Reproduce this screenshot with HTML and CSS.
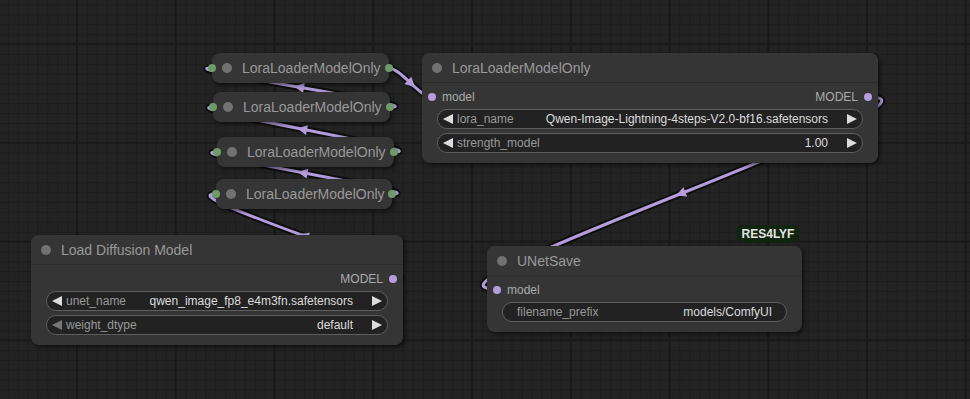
FILE: index.html
```html
<!DOCTYPE html>
<html lang="en">
<head>
<meta charset="UTF-8">
<meta name="viewport" content="width=device-width, initial-scale=1.0">
<title>Workflow</title>
<link rel="stylesheet" href="styles.css">
</head>
<body>

<div class="graph">

    <!-- links are drawn under the nodes -->
    <svg class="links" width="970" height="399" viewBox="0 0 970 399">
        <g class="link-border">
            <path d="M388 68 C401.2 68 418.8 97 432 97"/>
            <path d="M390 107 C435.6 107 166.4 68 212 68"/>
            <path d="M394 152 C440.4 152 167.6 107 214 107"/>
            <path d="M392 194 C437 194 172 152 217 152"/>
            <path d="M395 279 C444.6 279 166.4 194 216 194"/>
            <path d="M869 97 C974 97 391 289 496 289"/>
        </g>
        <g class="link-line">
            <path d="M388 68 C401.2 68 418.8 97 432 97"/>
            <path d="M390 107 C435.6 107 166.4 68 212 68"/>
            <path d="M394 152 C440.4 152 167.6 107 214 107"/>
            <path d="M392 194 C437 194 172 152 217 152"/>
            <path d="M395 279 C444.6 279 166.4 194 216 194"/>
            <path d="M869 97 C974 97 391 289 496 289"/>
        </g>
        <g class="link-arrow">
            <polygon points="7,0 -3,-5 -3,5" transform="translate(410 82.5) rotate(43.3)"/>
            <polygon points="7,0 -3,-5 -3,5" transform="translate(301 87.5) rotate(189.9)"/>
            <polygon points="7,0 -3,-5 -3,5" transform="translate(304 129.5) rotate(191.2)"/>
            <polygon points="7,0 -3,-5 -3,5" transform="translate(304.5 173) rotate(190.8)"/>
            <polygon points="7,0 -3,-5 -3,5" transform="translate(305.5 236.5) rotate(200.4)"/>
            <polygon points="7,0 -3,-5 -3,5" transform="translate(682.5 193) rotate(158.1)"/>
        </g>
    </svg>

    <!-- collapsed lora chain -->
    <div class="node collapsed lora-a">
        <span class="pin pin-in"></span>
        <span class="title-dot"></span>LoraLoaderModelOnly
        <span class="pin pin-out"></span>
    </div>
    <div class="node collapsed lora-b">
        <span class="pin pin-in"></span>
        <span class="title-dot"></span>LoraLoaderModelOnly
        <span class="pin pin-out"></span>
    </div>
    <div class="node collapsed lora-c">
        <span class="pin pin-in"></span>
        <span class="title-dot"></span>LoraLoaderModelOnly
        <span class="pin pin-out"></span>
    </div>
    <div class="node collapsed lora-d">
        <span class="pin pin-in"></span>
        <span class="title-dot"></span>LoraLoaderModelOnly
        <span class="pin pin-out"></span>
    </div>

    <!-- LoraLoaderModelOnly -->
    <div class="node lora-main">
        <div class="node-title"><span class="title-dot"></span>LoraLoaderModelOnly</div>
        <div class="node-body">
            <div class="slots">
                <div class="slot slot-in"><span class="dot"></span>model</div>
                <div class="slot slot-out">MODEL<span class="dot"></span></div>
            </div>
            <div class="widget combo">
                <span class="arrow arrow-left"></span>
                <span class="w-label">lora_name</span>
                <span class="w-value">Qwen-Image-Lightning-4steps-V2.0-bf16.safetensors</span>
                <span class="arrow arrow-right"></span>
            </div>
            <div class="widget combo">
                <span class="arrow arrow-left"></span>
                <span class="w-label">strength_model</span>
                <span class="w-value">1.00</span>
                <span class="arrow arrow-right"></span>
            </div>
        </div>
    </div>

    <!-- Load Diffusion Model -->
    <div class="node unet-loader">
        <div class="node-title"><span class="title-dot"></span>Load Diffusion Model</div>
        <div class="node-body">
            <div class="slots">
                <div class="slot"></div>
                <div class="slot slot-out">MODEL<span class="dot"></span></div>
            </div>
            <div class="widget combo">
                <span class="arrow arrow-left"></span>
                <span class="w-label">unet_name</span>
                <span class="w-value">qwen_image_fp8_e4m3fn.safetensors</span>
                <span class="arrow arrow-right"></span>
            </div>
            <div class="widget combo">
                <span class="arrow arrow-left dim"></span>
                <span class="w-label">weight_dtype</span>
                <span class="w-value">default</span>
                <span class="arrow arrow-right"></span>
            </div>
        </div>
    </div>

    <!-- UNetSave -->
    <div class="badge">RES4LYF</div>
    <div class="node unet-save">
        <div class="node-title"><span class="title-dot"></span>UNetSave</div>
        <div class="node-body">
            <div class="slots">
                <div class="slot slot-in"><span class="dot"></span>model</div>
            </div>
            <div class="widget text">
                <span class="w-label">filename_prefix</span>
                <span class="w-value">models/ComfyUI</span>
            </div>
        </div>
    </div>

</div>

</body>
</html>
```

FILE: styles.css
```css
* {
    box-sizing: border-box;
}

body {
    margin: 0;
    padding: 0;
    background-color: #232323;
    font-family: "Liberation Sans", Arial, sans-serif;
    overflow: hidden;
}

.graph {
    position: relative;
    width: 970px;
    height: 399px;
    overflow: hidden;
    background-color: #232323;
    background-image:
        linear-gradient(to right, #191919 2px, transparent 2px),
        linear-gradient(to bottom, #191919 2px, transparent 2px),
        linear-gradient(to right, #1d1d1d 1px, transparent 1px),
        linear-gradient(to bottom, #1d1d1d 1px, transparent 1px);
    background-size: 98.75px 98.75px, 98.75px 98.75px, 9.875px 9.875px, 9.875px 9.875px;
    background-position: 76px 43px, 76px 43px, 7.875px 4.5px, 7.875px 4.5px;
}

/* links */
.links {
    position: absolute;
    left: 0;
    top: 0;
}

.link-border path {
    fill: none;
    stroke: #000;
    stroke-opacity: 0.6;
    stroke-width: 7;
}

.link-line path {
    fill: none;
    stroke: #b39ddb;
    stroke-width: 3;
}

.link-arrow polygon {
    fill: #b39ddb;
}

/* nodes */
.node {
    position: absolute;
    background-color: #353535;
    border-radius: 8px;
    box-shadow: 2px 2px 4px rgba(0, 0, 0, 0.55);
    color: #999;
}

.node-title {
    height: 30px;
    display: flex;
    align-items: center;
    gap: 10px;
    padding-left: 10px;
    font-size: 14px;
    border-bottom: 1px solid #2c2c2c;
    border-radius: 8px 8px 0 0;
    background-color: #353535;
}

.title-dot {
    width: 10px;
    height: 10px;
    border-radius: 50%;
    background-color: #727272;
    flex-shrink: 0;
}

.node-body {
    padding: 4px 0 10px;
}

.slots {
    display: flex;
    justify-content: space-between;
    height: 20px;
    margin-bottom: 2px;
}

.slot {
    display: flex;
    align-items: center;
    gap: 6px;
    font-size: 12px;
    color: #aaa;
}

.slot-in {
    padding-left: 6px;
}

.slot-out {
    padding-right: 6px;
}

.dot {
    width: 8px;
    height: 8px;
    border-radius: 50%;
    background-color: #b39ddb;
}

/* widgets */
.widget {
    display: flex;
    align-items: center;
    height: 20px;
    margin: 0 15px;
    border: 1px solid #5e5e5e;
    border-radius: 10px;
    background-color: #222;
    font-size: 12px;
    white-space: nowrap;
}

.widget + .widget {
    margin-top: 4px;
}

.w-label {
    color: #999;
}

.w-value {
    flex: 1;
    text-align: right;
    color: #ddd;
}

.combo {
    padding: 0 5px;
}

.combo .arrow-left {
    margin-right: 4px;
}

.combo .w-value {
    margin-right: 19px;
}

.text {
    padding: 0 14px;
}

.arrow {
    width: 0;
    height: 0;
    border-top: 5px solid transparent;
    border-bottom: 5px solid transparent;
}

.arrow-left {
    border-right: 10px solid #ddd;
}

.arrow-left.dim {
    border-right-color: #777;
}

.arrow-right {
    border-left: 10px solid #ddd;
}

/* collapsed nodes */
.collapsed {
    width: 177px;
    height: 30px;
    display: flex;
    align-items: center;
    gap: 10px;
    padding-left: 10px;
    font-size: 14px;
}

.pin {
    position: absolute;
    top: 11px;
    width: 8px;
    height: 8px;
    border-radius: 50%;
    background-color: #6f9a6a;
}

.pin-in {
    left: -4px;
}

.pin-out {
    right: -4px;
}

/* node places on the canvas */
.lora-a { left: 212px; top: 53px; }
.lora-b { left: 213px; top: 92px; }
.lora-c { left: 217px; top: 137px; }
.lora-d { left: 216px; top: 179px; width: 176px; }

.lora-main {
    left: 422px;
    top: 53px;
    width: 456px;
}

.unet-loader {
    left: 31px;
    top: 235px;
    width: 372px;
}

.unet-save {
    left: 487px;
    top: 246px;
    width: 315px;
}

.badge {
    position: absolute;
    left: 737px;
    top: 225px;
    width: 62px;
    height: 18px;
    line-height: 18px;
    border-radius: 5px;
    background-color: #11240f;
    color: #e4e4e4;
    font-size: 12px;
    font-weight: bold;
    text-align: center;
}
```
